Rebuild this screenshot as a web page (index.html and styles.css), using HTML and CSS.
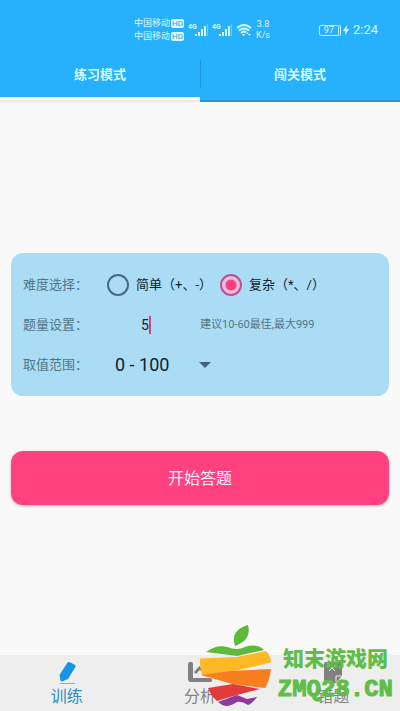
FILE: index.html
```html
<!DOCTYPE html>
<html lang="zh-CN">
<head>
<meta charset="utf-8">
<meta name="viewport" content="width=device-width, initial-scale=1">
<title>练习模式</title>
<link rel="stylesheet" href="styles.css">
</head>
<body>
<header class="top">
  <div class="status">
    <div class="carriers">
      <div class="carrier">中国移动<span class="hd">HD</span></div>
      <div class="carrier">中国移动<span class="hd">HD</span></div>
    </div>
    <svg class="signal" viewBox="0 0 20 14"><text x="0" y="6">4G</text><path d="M7 11h2v2H7zM10 9h2v4h-2zM13 6h2v7h-2zM16 3h2v10h-2z"/><path class="faint" d="M19 1h1v12h-1z"/></svg>
    <svg class="signal" viewBox="0 0 20 14"><text x="0" y="6">4G</text><path d="M7 11h2v2H7zM10 9h2v4h-2zM13 6h2v7h-2zM16 3h2v10h-2z"/><path class="faint" d="M19 1h1v12h-1z"/></svg>
    <svg class="wifi" viewBox="0 0 16 14"><path d="M1 5Q8-1 15 5M3 7.500Q8 3.500 13 7.500M5 10Q8 7.500 10 9.500" /><path class="solid" d="M6 11.500q2-1.500 3 0L7.500 13zM10 11l1.500-2 1 2zM12 11h3l-1.500 2z"/></svg>
    <div class="speed"><span>3.8</span><span>K/s</span></div>
    <div class="power">
      <span class="battery">97</span>
      <svg class="bolt" viewBox="0 0 6 10"><path d="M4 0 0 6h2.500L2 10l4-6H3.500z"/></svg>
      <time class="clock">2:24</time>
    </div>
  </div>
  <nav class="tabs">
    <a class="tab active" href="#practice">练习模式</a>
    <a class="tab" href="#challenge">闯关模式</a>
  </nav>
</header>
<main class="content">
  <form class="form">
    <div class="card">
      <div class="row" role="radiogroup" aria-labelledby="level">
        <span class="label" id="level">难度选择：</span>
        <label class="choice"><input class="radio" type="radio" name="level">简单（+、-）</label>
        <label class="choice"><input class="radio" type="radio" name="level" checked>复杂（*、/）</label>
      </div>
      <div class="row">
        <label class="label" for="count">题量设置：</label>
        <div class="count-box"><input class="count" id="count" type="text" value="5" size="1"><i class="caret"></i></div>
        <span class="hint">建议10-60最佳,最大999</span>
      </div>
      <div class="row">
        <label class="label" for="range">取值范围：</label>
        <div class="select-box">
          <select class="range" id="range"><option>0 - 100</option></select>
          <svg class="arrow" viewBox="0 0 12 6"><path d="M0 0h12L6 6z"/></svg>
        </div>
      </div>
    </div>
    <button class="start" type="button">开始答题</button>
  </form>
</main>
<footer class="bottom">
  <nav class="nav">
    <a class="item current" href="#train"><svg class="icon" viewBox="0 0 24 24"><path d="M12.500 1.500q1-1 2.300-.3l5 2.600q1.200.8.700 2L13 18l-6 2.500q-1 .2-1.500-1L4.500 14z"/><path class="ground" d="M5 22h15v1H5z"/></svg>训练</a>
    <a class="item" href="#stats"><svg class="icon" viewBox="0 0 24 24"><path d="M2 1h1.500Q5 1 5 3v14h17q2 0 2 1.500v1Q24 21 22 21H3q-3 0-3-3V3q0-2 2-2z"/><path class="line" d="M7 12l4.500-5 5 4 5-5v7"/></svg>分析</a>
    <a class="item" href="#wrong"><svg class="icon" viewBox="0 0 24 24"><path d="M5 1h14q2 0 2 2v12l-6 7H5q-2 0-2-2V3q0-2 2-2z"/><path class="cross" d="M8 4l6 6m0-6-6 6M15 21v-6h6"/><path d="M17 22l4-4v2q0 2-2 2z"/></svg>错题</a>
  </nav>
  <div class="mark">
    <svg class="apple" viewBox="0 0 72 82">
      <path fill="#5dba3d" d="M35 21Q30 5 48 0q4 15-13 21z"/>
      <path fill="#5dba3d" d="M6 27Q17 19 27 22q10 4 18 0 12-4 19 3L37 31z"/>
      <path fill="#ffb926" d="M0 33.500 37 32 66 26q5 5 5 11.500L35 46 2 50Q-.5 42 0 33.500z"/>
      <path fill="#f77f20" d="M1 50 30 46 71 44q-1 11-6 19L32 59z"/>
      <path fill="#e13b3c" d="M8 63 33 59 60 64 37 70 17 76Q11 71 8 63z"/>
      <path fill="#8e38a0" d="M18 77 37 70 47 74 57 72q-5 7-9 8-6-4-11-3-6 4-11 4-5-1-8-4z"/>
    </svg>
    <div class="words"><span class="site">知末游戏网</span><span class="domain">ZMQ28.CN</span></div>
  </div>
</footer>
</body>
</html>
```
FILE: styles.css
```css
* { box-sizing: border-box; }
body {
  margin: 0;
  min-height: 100vh;
  display: flex;
  flex-direction: column;
  background: #f9f9f9;
  color: #10222e;
  font: 13px/20px Roboto, "Noto Sans CJK SC", sans-serif;
}
a { color: inherit; text-decoration: none; }
svg { display: block; flex: none; }

.top { background: #27b0fb; color: #d8fafd; }
.status {
  height: 60px;
  padding: 0 22px 0 134px;
  display: flex;
  align-items: center;
  gap: 4px;
}
.carrier { display: flex; align-items: center; gap: 1px; font-size: 9px; line-height: 13px; white-space: nowrap; }
.hd {
  padding: 0 1px;
  border-radius: 2px;
  background: #d8fafd;
  color: #27a0dc;
  font-size: 8px;
  line-height: 9px;
}
.signal { width: 20px; height: 14px; fill: #d8fafd; overflow: visible; }
.signal text { font: bold 7px Roboto, sans-serif; }
.faint { opacity: .4; }
.wifi { width: 16px; height: 14px; fill: none; stroke: #d8fafd; stroke-width: 2; }
.wifi .solid { fill: #d8fafd; stroke: none; }
.speed { display: flex; flex-direction: column; align-items: center; font-size: 9px; line-height: 11px; }
.power { margin-left: auto; display: flex; align-items: center; gap: 4px; }
.battery {
  width: 20px;
  border: 1px solid #b4f0fb;
  border-radius: 2px;
  font-size: 9px;
  line-height: 9px;
  text-align: center;
  box-shadow: 1px 0 #27b0fb, 2px 0 #d8fafd;
}
.bolt { width: 6px; height: 10px; fill: #d8fafd; }
.clock { font-size: 13px; }

.tabs { display: flex; }
.tab {
  position: relative;
  flex: 1;
  height: 42px;
  padding-top: 5px;
  border-bottom: 2px solid #2594cf;
  text-align: center;
  font-weight: bold;
}
.tab.active { border-bottom: 2px solid #f8e6e2; box-shadow: inset 0 -3px #fbffff; }
.tab + .tab::before {
  content: "";
  position: absolute;
  left: 0;
  top: 0;
  width: 1px;
  height: 28px;
  background: #2096dc;
}

.content { flex: 1; display: flex; flex-direction: column; justify-content: center; padding: 0 11px; }
.form { display: flex; flex-direction: column; gap: 55px; }
.card { padding: 12px 12px 11px; border-radius: 12px; background: #abdcf5; }
.row { height: 40px; display: flex; align-items: center; }
.label { width: 84px; flex: none; color: #527587; }
.choice { width: 113px; display: flex; align-items: center; gap: 7px; white-space: nowrap; }
.radio {
  appearance: none;
  flex: none;
  width: 22px;
  height: 22px;
  margin: 0;
  border: 2px solid #466b80;
  border-radius: 50%;
}
.radio:checked {
  border-color: #c44d91;
  background: radial-gradient(circle, #ff3f7e 5px, #dfc2df 6px);
}
.count-box { width: 93px; display: flex; align-items: center; padding-left: 34px; }
.count {
  width: 8px;
  padding: 0;
  border: 0;
  background: none;
  color: inherit;
  font: 14px/20px Roboto, sans-serif;
}
.caret { width: 2px; height: 18px; background: #d5407f; }
.hint { color: #527587; font-size: 11px; white-space: nowrap; }
.select-box { display: flex; align-items: center; gap: 29px; padding-left: 8px; }
.range {
  appearance: none;
  padding: 0;
  border: 0;
  background: none;
  color: inherit;
  font: 18px/24px Roboto, sans-serif;
}
.arrow { width: 12px; height: 6px; fill: #41667a; }
.start {
  height: 54px;
  padding: 2px 0 0;
  border: 0;
  border-radius: 12px;
  background: #ff4180;
  color: #fff2fa;
  font: 16px/24px Roboto, "Noto Sans CJK SC", sans-serif;
  box-shadow: 0 1px 3px #0004;
}

.bottom { position: relative; }
.nav { display: flex; height: 56px; background: #eee; }
.item {
  flex: 1;
  display: flex;
  flex-direction: column;
  align-items: center;
  gap: 2px;
  padding-top: 6px;
  color: #858585;
  font-size: 16px;
  line-height: 20px;
}
.item.current { color: #2b8fc5; }
.icon { width: 24px; height: 24px; fill: #808080; }
.current .icon { fill: #1993e4; }
.icon .ground { fill: #a5a5a5; }
.icon .line { fill: none; stroke: #808080; stroke-width: 3; }
.icon .cross { fill: none; stroke: #eee; stroke-width: 1; }

.mark {
  position: absolute;
  right: 7px;
  bottom: 4px;
  display: flex;
  gap: 6px;
  align-items: flex-end;
  pointer-events: none;
}
.apple { width: 72px; height: 82px; }
.words { display: flex; flex-direction: column; align-items: center; color: #5fbd49; }
.site { font: 900 21px/32px "Noto Sans CJK SC", sans-serif; }
.domain { font: bold 24px/34px "Liberation Mono", monospace; -webkit-text-stroke: 1px #5fbd49; }
```
